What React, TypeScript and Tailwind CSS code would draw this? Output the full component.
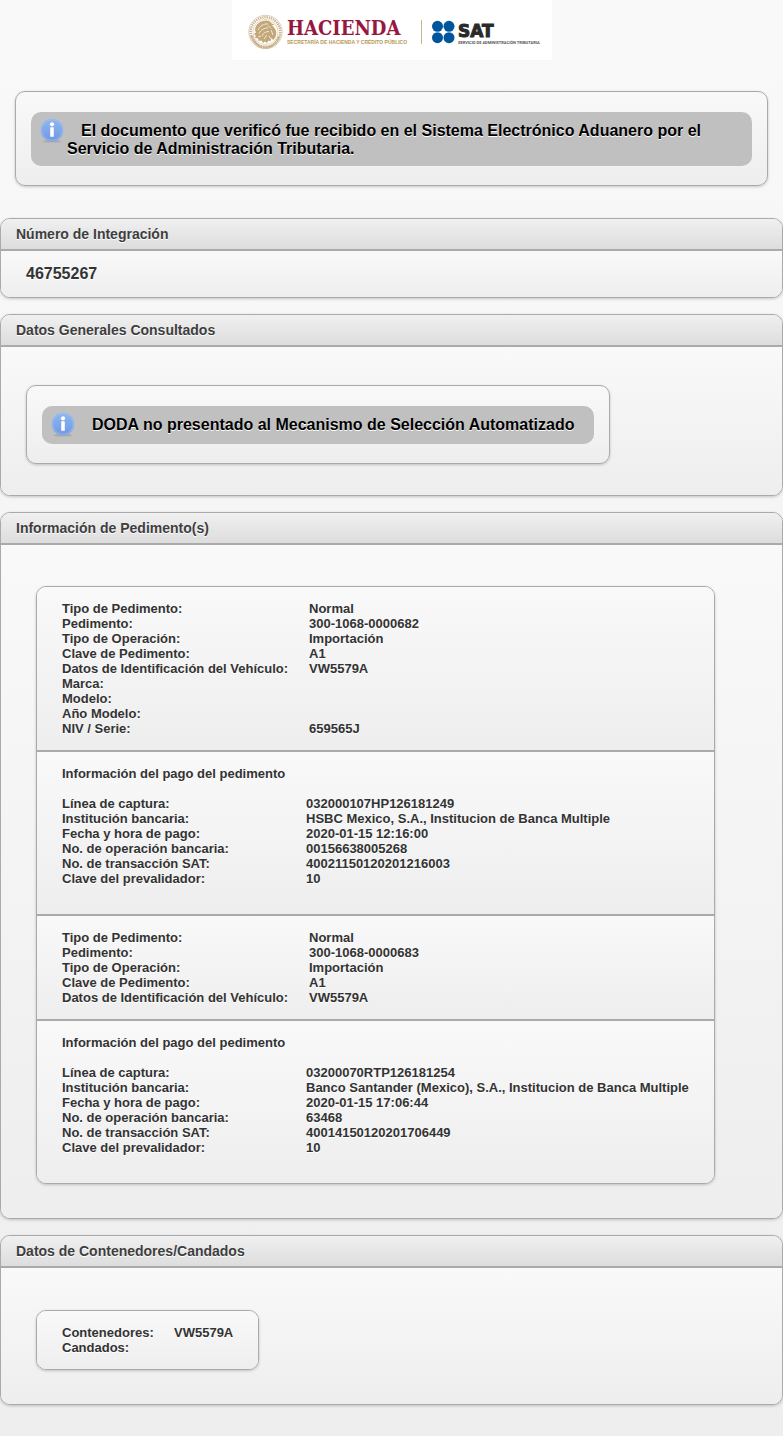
import type { ReactNode } from "react";

type Row = [label: string, value: string];

const firstPedimento: Row[] = [
  ["Tipo de Pedimento:", "Normal"],
  ["Pedimento:", "300-1068-0000682"],
  ["Tipo de Operación:", "Importación"],
  ["Clave de Pedimento:", "A1"],
  ["Datos de Identificación del Vehículo:", "VW5579A"],
  ["Marca:", ""],
  ["Modelo:", ""],
  ["Año Modelo:", ""],
  ["NIV / Serie:", "659565J"],
];

const firstPago: Row[] = [
  ["Línea de captura:", "032000107HP126181249"],
  ["Institución bancaria:", "HSBC Mexico, S.A., Institucion de Banca Multiple"],
  ["Fecha y hora de pago:", "2020-01-15 12:16:00"],
  ["No. de operación bancaria:", "00156638005268"],
  ["No. de transacción SAT:", "40021150120201216003"],
  ["Clave del prevalidador:", "10"],
];

const secondPedimento: Row[] = [
  ["Tipo de Pedimento:", "Normal"],
  ["Pedimento:", "300-1068-0000683"],
  ["Tipo de Operación:", "Importación"],
  ["Clave de Pedimento:", "A1"],
  ["Datos de Identificación del Vehículo:", "VW5579A"],
];

const secondPago: Row[] = [
  ["Línea de captura:", "03200070RTP126181254"],
  ["Institución bancaria:", "Banco Santander (Mexico), S.A., Institucion de Banca Multiple"],
  ["Fecha y hora de pago:", "2020-01-15 17:06:44"],
  ["No. de operación bancaria:", "63468"],
  ["No. de transacción SAT:", "40014150120201706449"],
  ["Clave del prevalidador:", "10"],
];

const contenedores: Row[] = [
  ["Contenedores:", "VW5579A"],
  ["Candados:", ""],
];

function Logo() {
  return (
    <svg
      viewBox="0 0 320 60"
      className="block h-[60px] w-[320px] bg-white [text-shadow:none]"
      role="img"
      aria-label="Hacienda y SAT"
    >
      <g fill="none" stroke="#c8b088">
        <circle cx="33.500" cy="32" r="14.800" strokeWidth="2.400" strokeDasharray="1.300 0.900" />
        <circle cx="33.500" cy="32" r="16.700" strokeWidth="0.600" />
        <circle cx="33.500" cy="32" r="12.600" strokeWidth="0.500" />
        <path d="M20 36c2 7 7 11.500 13.500 11.500S45 43 47 36" strokeWidth="2.400" strokeDasharray="2.200 0.500" />
      </g>
      <path
        d="M23 29c1-5 5.500-8.500 11-8.500 2.500 0 4.500 1 5.500 2.800l3 1.200-2.500 1c2 1.500 4.300 4 4.300 7.500 0 3-1.300 5.500-3.300 7l-1.500-2-1 3.500-2-1-1.500 2.500-2-1.500-2 1.500-1.500-2.500-3 .5-.3-2.500-3-.5.5-2.500-2-1.500 2-1z"
        fill="#c2a878"
      />
      <path
        d="M26 30c2-4 5.500-6.500 10-6M27 33.500c2-4 5.500-5.500 9-5.500M30 36c1-3 4-4.500 7-4.500M36 25.500l3 3M39 30l2 5M32 39l3-4M26 37l3-1M37 36l2 3"
        fill="none"
        stroke="#f6efe2"
        strokeWidth="0.900"
      />
      <text
        x="55"
        y="35"
        fill="#98173f"
        className="font-['DejaVu_Serif_Condensed','DejaVu_Serif',serif] text-[20px] font-bold"
      >
        HACIENDA
      </text>
      <text x="55" y="44" fill="#b8975a" className="font-['Liberation_Sans',sans-serif] text-[5px] font-bold">
        SECRETARÍA DE HACIENDA Y CRÉDITO PÚBLICO
      </text>
      <path d="M189.500 20v24" stroke="#c9b58d" strokeWidth="1" />
      <g fill="#00569d">
        <circle cx="205.500" cy="26.300" r="5.500" />
        <circle cx="217" cy="26.300" r="5.500" />
        <circle cx="205.500" cy="37.700" r="5.500" />
        <circle cx="217" cy="37.700" r="5.500" />
      </g>
      <text
        x="226"
        y="37"
        fill="#2b2a29"
        stroke="#2b2a29"
        strokeWidth="1"
        className="font-['DejaVu_Sans',sans-serif] text-[17px] font-bold"
      >
        SAT
      </text>
      <text x="226" y="44" fill="#55565a" className="font-['Roboto',sans-serif] text-[4px]">
        SERVICIO DE ADMINISTRACIÓN TRIBUTARIA
      </text>
    </svg>
  );
}

function InfoIcon() {
  return (
    <svg viewBox="0 0 24 28" className="h-7 w-6 shrink-0" aria-hidden="true">
      <defs>
        <linearGradient id="info-fill" x1="0" y1="0" x2="0" y2="1">
          <stop offset="0" stopColor="#8fb8ee" />
          <stop offset="1" stopColor="#6f97e6" />
        </linearGradient>
      </defs>
      <ellipse cx="12" cy="24.300" rx="10" ry="1.300" fill="#aaaaaa" />
      <circle cx="12" cy="13" r="11.200" fill="url(#info-fill)" />
      <circle cx="12" cy="13" r="10.300" fill="none" stroke="#9fc4f2" strokeWidth="0.700" />
      <circle cx="12" cy="7.300" r="2.100" fill="#fff" />
      <rect x="10.200" y="10.300" width="3.600" height="9.500" rx="0.600" fill="#fff" />
    </svg>
  );
}

function Notice({ children }: { children: ReactNode }) {
  return (
    <div className="rounded-[10px] border border-[#aaa] bg-linear-to-b from-[#f9f9f9] to-[#eee] px-[15px] pt-5 pb-[19px] shadow-[0_1px_3px_rgba(0,0,0,0.2)]">
      <div className="flex items-start gap-[3px] rounded-[10px] bg-[#c0c0c0] py-[5px] pr-5 pl-[9px] text-base text-black">
        <InfoIcon />
        <p className="pt-[5px] pb-[3px] indent-[14px] leading-[18px]">{children}</p>
      </div>
    </div>
  );
}

function Panel({ title, children }: { title: string; children: ReactNode }) {
  return (
    <section className="rounded-[10px] border border-[#aaa] shadow-[0_1px_3px_rgba(0,0,0,0.2)]">
      <h2 className="rounded-t-[9px] border-b-2 border-[#aaa] bg-linear-to-b from-[#f0f0f0] to-[#ddd] px-[15px] py-[6px] text-sm leading-[18px] text-[#3e3e3e]">
        {title}
      </h2>
      <div className="rounded-b-[9px] bg-linear-to-b from-[#f9f9f9] to-[#eee]">{children}</div>
    </section>
  );
}

function DataTable({ rows, labelClass }: { rows: Row[]; labelClass: string }) {
  return (
    <table className="border-collapse text-left">
      <tbody>
        {rows.map(([label, value]) => (
          <tr key={label}>
            <th scope="row" className={labelClass}>
              {label}
            </th>
            <td className="p-0">{value}</td>
          </tr>
        ))}
      </tbody>
    </table>
  );
}

function Block({ children }: { children: ReactNode }) {
  return <div className="bg-linear-to-b from-[#f9f9f9] to-[#eee] px-[25px] py-[14px]">{children}</div>;
}

function Pago({ rows }: { rows: Row[] }) {
  return (
    <Block>
      <h3 className="mb-[15px]">Información del pago del pedimento</h3>
      <div className="pb-[14px]">
        <DataTable rows={rows} labelClass="w-[244px] p-0" />
      </div>
    </Block>
  );
}

const cardClass =
  "w-fit divide-y-2 divide-[#aaa] overflow-hidden rounded-[10px] border border-[#aaa] text-[13px] leading-[15px] shadow-[0_1px_3px_rgba(0,0,0,0.2)]";

export default function App() {
  return (
    <div className="min-h-screen bg-linear-to-b from-[#f9f9f9] to-[#eee] pb-[31px] font-['Liberation_Sans',Arial,sans-serif] font-bold text-[#333] [text-shadow:0_1px_0_#fff]">
      <header className="flex justify-center">
        <Logo />
      </header>
      <main>
        <div className="px-[15px] pt-[31px] pb-8">
          <Notice>
            El documento que verificó fue recibido en el Sistema Electrónico Aduanero por el Servicio de Administración
            Tributaria.
          </Notice>
        </div>
        <div className="flex flex-col gap-4">
          <Panel title="Número de Integración">
            <p className="px-[25px] py-[14px] text-base leading-[18px]">46755267</p>
          </Panel>
          <Panel title="Datos Generales Consultados">
            <div className="w-fit px-[25px] pt-[38px] pb-[31px]">
              <Notice>DODA no presentado al Mecanismo de Selección Automatizado</Notice>
            </div>
          </Panel>
          <Panel title="Información de Pedimento(s)">
            <div className="px-[35px] pt-[41px] pb-[34px]">
              <div className={cardClass}>
                <Block>
                  <DataTable rows={firstPedimento} labelClass="w-[247px] p-0" />
                </Block>
                <Pago rows={firstPago} />
                <Block>
                  <DataTable rows={secondPedimento} labelClass="w-[247px] p-0" />
                </Block>
                <Pago rows={secondPago} />
              </div>
            </div>
          </Panel>
          <Panel title="Datos de Contenedores/Candados">
            <div className="px-[35px] pt-[42px] pb-[34px]">
              <div className={cardClass}>
                <Block>
                  <DataTable rows={contenedores} labelClass="w-[112px] p-0" />
                </Block>
              </div>
            </div>
          </Panel>
        </div>
      </main>
    </div>
  );
}
